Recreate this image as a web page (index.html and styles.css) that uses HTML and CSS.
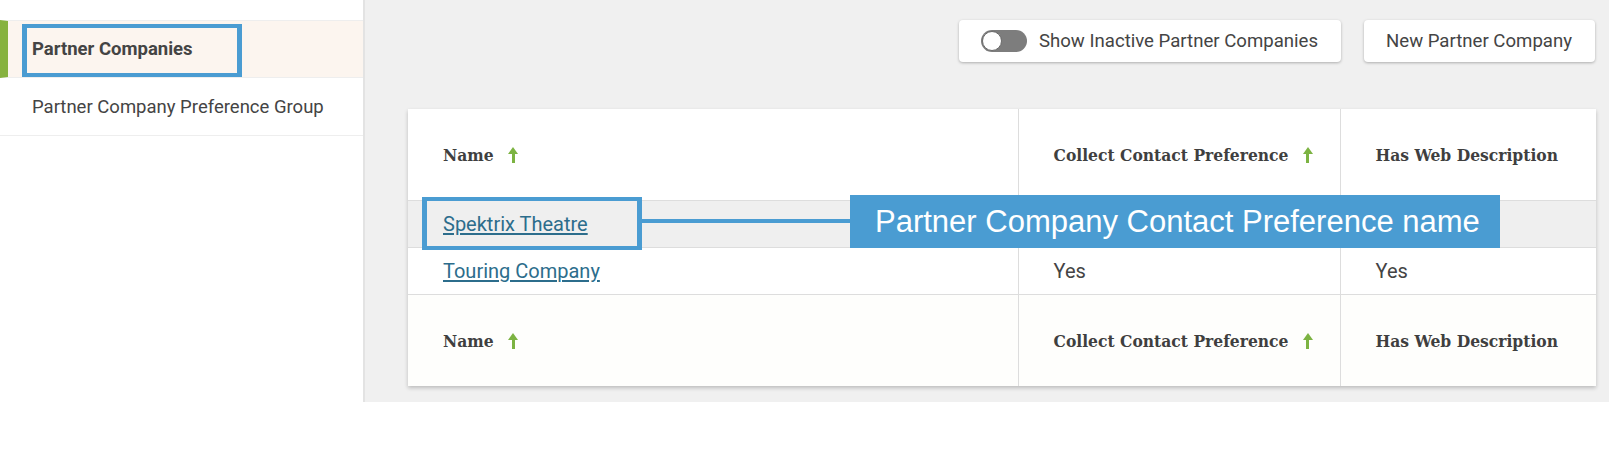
FILE: index.html
```
<!DOCTYPE html>
<html lang="en">
<head>
    <meta charset="UTF-8">
    <title>Partner Companies</title>
    <link rel="stylesheet" href="styles.css">
</head>
<body>
<div class="page">
    <aside class="sidebar">
        <nav class="side-nav">
            <a class="side-item active" href="#">
                <span class="side-label">Partner Companies</span>
                <span class="mark mark-side"></span>
            </a>
            <a class="side-item" href="#">
                <span class="side-label">Partner Company Preference Group</span>
            </a>
        </nav>
    </aside>

    <main class="content">
        <div class="toolbar">
            <button class="btn" type="button">
                <span class="toggle"><span class="knob"></span></span>
                Show Inactive Partner Companies
            </button>
            <button class="btn" type="button">New Partner Company</button>
        </div>

        <div class="card">
            <table class="grid">
                <colgroup>
                    <col class="col-name">
                    <col class="col-collect">
                    <col class="col-web">
                </colgroup>
                <thead>
                    <tr class="head-row">
                        <th>Name <span class="sort"></span></th>
                        <th>Collect Contact Preference <span class="sort"></span></th>
                        <th>Has Web Description</th>
                    </tr>
                </thead>
                <tbody>
                    <tr class="row hover">
                        <td><a class="link" href="#">Spektrix Theatre</a></td>
                        <td></td>
                        <td></td>
                    </tr>
                    <tr class="row">
                        <td><a class="link" href="#">Touring Company</a></td>
                        <td>Yes</td>
                        <td>Yes</td>
                    </tr>
                </tbody>
                <tfoot>
                    <tr class="head-row foot-row">
                        <th>Name <span class="sort"></span></th>
                        <th>Collect Contact Preference <span class="sort"></span></th>
                        <th>Has Web Description</th>
                    </tr>
                </tfoot>
            </table>

            <!-- annotation over the first row -->
            <span class="mark mark-row"></span>
            <span class="connector"></span>
            <span class="callout">Partner Company Contact Preference name</span>
        </div>
    </main>
</div>
</body>
</html>
```

FILE: styles.css
```
* {
    box-sizing: border-box;
}

body {
    margin: 0;
    background: #ffffff;
    font-family: Roboto, "Liberation Sans", sans-serif;
    color: #444444;
}

.page {
    display: flex;
    height: 402px;
}

/* sidebar */
.sidebar {
    width: 365px;
    flex-shrink: 0;
    background: #ffffff;
    border-right: 2px solid #e3e3e3;
    padding-top: 20px;
}

.side-nav {
    display: flex;
    flex-direction: column;
}

.side-item {
    position: relative;
    display: flex;
    align-items: center;
    height: 58px;
    padding-left: 32px;
    font-size: 18.5px;
    color: #444444;
    text-decoration: none;
    border-bottom: 1px solid #eeeeee;
}

.side-item.active {
    background: #fcf5ef;
    font-weight: bold;
    border-top: 1px solid #eeeeee;
    border-left: 8px solid #86b23f;
    padding-left: 24px;
}

/* main area */
.content {
    flex: 1;
    background: #f0f0f0;
    padding: 20px 13px 16px 43px;
    display: flex;
    flex-direction: column;
    gap: 47px;
}

.toolbar {
    display: flex;
    justify-content: flex-end;
    gap: 23px;
    padding-right: 1px;
}

.btn {
    display: flex;
    align-items: center;
    gap: 12px;
    height: 42px;
    padding: 0 23px 0 22px;
    border: none;
    border-radius: 4px;
    background: #ffffff;
    box-shadow: 0 1px 3px rgba(0, 0, 0, 0.28);
    font-family: Roboto, "Liberation Sans", sans-serif;
    font-size: 18.6px;
    color: #444444;
}

.toggle {
    display: flex;
    align-items: center;
    width: 46px;
    height: 22px;
    border-radius: 11px;
    background: #7d7d7d;
    padding: 0 1px;
}

.knob {
    width: 20px;
    height: 20px;
    border-radius: 50%;
    background: #ffffff;
    border: 1px solid #6a6a6a;
}

/* table card */
.card {
    position: relative;
    width: 1188px;
    background: #ffffff;
    box-shadow: 0 2px 4px rgba(0, 0, 0, 0.22);
}

.grid {
    width: 100%;
    border-collapse: collapse;
    table-layout: fixed;
}

.col-name { width: 610px; }
.col-collect { width: 322px; }
.col-web { width: 256px; }

.grid th,
.grid td {
    text-align: left;
    padding: 0 0 0 35px;
    border-left: 1px solid #dddddd;
    white-space: nowrap;
}

.grid th:first-child,
.grid td:first-child {
    border-left: none;
}

.head-row {
    height: 91px;
}

.head-row th {
    font-family: "DejaVu Serif Condensed", "DejaVu Serif", serif;
    font-weight: bold;
    font-size: 17.3px;
    color: #3f3f3f;
    padding-top: 2px;
}

.foot-row {
    height: 92px;
    background: #fefefc;
    border-top: 1px solid #dddddd;
}

.row {
    height: 47px;
    border-top: 1px solid #dddddd;
    font-size: 20px;
}

.row.hover {
    background: #efefef;
}

.link {
    color: #2c6d8c;
    text-decoration: underline;
    text-underline-offset: 2px;
}

.sort {
    display: inline-block;
    width: 10px;
    height: 16px;
    margin-left: 9px;
    vertical-align: -2px;
    background:
        linear-gradient(#7cb342, #7cb342) center 6px / 3px 10px no-repeat;
    position: relative;
}

.sort::before {
    content: "";
    position: absolute;
    left: 0;
    top: 0;
    border-left: 5px solid transparent;
    border-right: 5px solid transparent;
    border-bottom: 7px solid #7cb342;
}

/* annotation marks */
.mark {
    position: absolute;
    border: 5px solid #4a9cd2;
    pointer-events: none;
}

.mark-side {
    left: 14px;
    top: 3px;
    width: 220px;
    height: 53px;
    border-width: 4px 5px;
}

.mark-row {
    left: 14px;
    top: 88px;
    width: 220px;
    height: 53px;
    border-width: 4px 5px;
}

.connector {
    position: absolute;
    left: 234px;
    top: 110px;
    width: 208px;
    height: 4px;
    background: #4a9cd2;
}

.callout {
    position: absolute;
    left: 442px;
    top: 86px;
    width: 650px;
    height: 53px;
    padding-left: 25px;
    display: flex;
    align-items: center;
    background: #4a9cd2;
    color: #ffffff;
    font-family: "Liberation Sans", Arial, sans-serif;
    font-size: 31px;
}
```
